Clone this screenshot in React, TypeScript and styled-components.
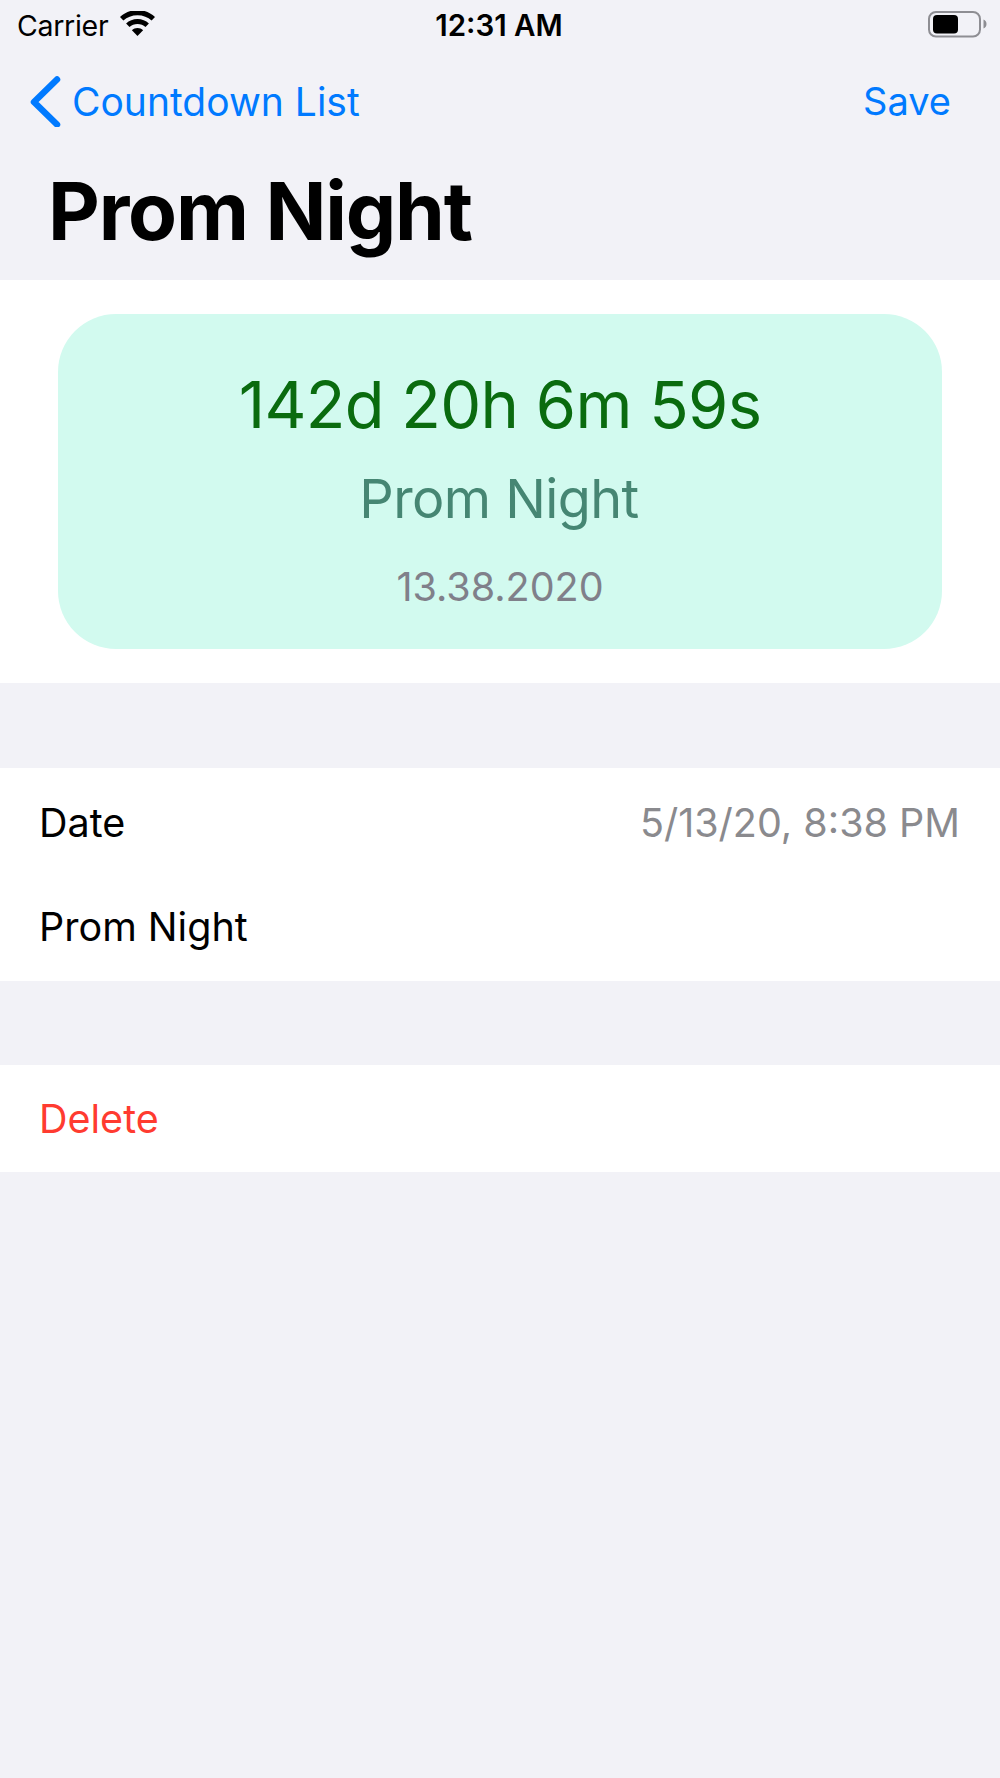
import React from "react";
import styled, { createGlobalStyle } from "styled-components";

const Global = createGlobalStyle`
  html, body { margin: 0; padding: 0; background: #f2f2f7; }
  body { font-family: Inter, "Liberation Sans", sans-serif; -webkit-font-smoothing: antialiased; }
`;

const Page = styled.div`
  width: 1000px;
  height: 1778px;
  background: #f2f2f7;
  overflow: hidden;
  display: flex;
  flex-direction: column;
`;

const StatusBar = styled.div`
  height: 52px;
  box-sizing: border-box;
  display: grid;
  grid-template-columns: 1fr auto 1fr;
  align-items: center;
  padding: 0 13px 2px 17px;
  color: #000;
`;
const StatusLeft = styled.div`
  display: flex;
  align-items: center;
  gap: 11px;
`;
const Carrier = styled.span`
  font-size: 28.5px;
  letter-spacing: -0.3px;
`;
const Clock = styled.span`
  font-size: 29.5px;
  font-weight: 600;
  margin-right: 6px;
`;
const StatusRight = styled.div`
  display: flex;
  justify-content: flex-end;
`;

const NavBar = styled.div`
  height: 100px;
  box-sizing: border-box;
  display: flex;
  align-items: center;
  justify-content: space-between;
  padding: 0 49px 2px 29px;
  color: #007aff;
  font-size: 38px;
`;
const Back = styled.div`
  display: flex;
  align-items: center;
  gap: 11px;
  font-size: 39px;
`;
const Title = styled.h1`
  margin: 0;
  height: 128px;
  padding: 17px 0 0 48px;
  box-sizing: border-box;
  font-size: 80px;
  line-height: 84px;
  font-weight: 700;
  letter-spacing: -1.2px;
  color: #000;
`;

const Section = styled.section<{ $gap?: number }>`
  background: #fff;
  margin-top: ${(p) => p.$gap ?? 0}px;
`;
const CardWrap = styled(Section)`
  padding: 34px 58px;
`;
const Card = styled.div`
  height: 335px;
  border-radius: 58px;
  background: #d2faef;
  display: flex;
  flex-direction: column;
  align-items: center;
`;
const Timer = styled.div`
  margin-top: 52px;
  font-size: 65px;
  line-height: 78px;
  color: #0a6b0f;
  letter-spacing: -0.7px;
`;
const CardName = styled.div`
  margin-top: 23px;
  padding-right: 2px;
  font-size: 54px;
  line-height: 64px;
  color: #468673;
  letter-spacing: -0.6px;
`;
const CardDate = styled.div`
  margin-top: 32px;
  font-size: 39.5px;
  line-height: 48px;
  color: #80808a;
`;

const RowGroup = styled(Section)`
  padding: 3px 0 2px;
`;
const Row = styled.div`
  height: 104px;
  padding: 0 40px 0 39px;
  display: flex;
  align-items: center;
  justify-content: space-between;
  font-size: 39.5px;
  color: #000;
`;
const RowValue = styled.span`
  color: #8a8a8e;
`;
const DeleteRow = styled(Row)`
  color: #ff3b30;
  height: 107px;
`;

const Wifi = () => (
  <svg width="37" height="28" viewBox="0 2 37 28" fill="#000">
    <path d="M18.5 1C11.6 1 5.6 3.7 1 8l3.4 3.6C8 8.2 13 6.2 18.5 6.2S29 8.2 32.6 11.6L36 8C31.4 3.7 25.4 1 18.5 1Z" />
    <path d="M18.5 10c-4.4 0-8.4 1.7-11.4 4.5l3.4 3.6c2.1-1.9 4.9-3.1 8-3.1s5.9 1.2 8 3.1l3.4-3.6C26.900 11.700 22.900 10 18.500 10Z" />
    <path d="M18.500 19c-2.100 0-4.100.8-5.600 2.200l5.600 5.800 5.600-5.800C22.600 19.800 20.600 19 18.500 19Z" />
  </svg>
);

const Battery = () => (
  <svg width="60" height="28" viewBox="0 0 60 28">
    <rect x="2" y="1" width="51" height="24.500" rx="7" fill="none" stroke="#8e8e93" strokeWidth="2" />
    <rect x="6" y="4" width="25" height="18.500" rx="4" fill="#000" />
    <path d="M56.500 8.500c2 .8 3 2.600 3 4.500s-1 3.700-3 4.500Z" fill="#8e8e93" />
  </svg>
);

const Chevron = () => (
  <svg width="32" height="52" viewBox="0 -1 32 52" fill="none">
    <path d="M28 3.500 5 26l23 22.500" stroke="#007aff" strokeWidth="6.500" strokeLinecap="round" strokeLinejoin="round" />
  </svg>
);

export default function App() {
  return (
    <Page>
      <Global />
      <StatusBar>
        <StatusLeft>
          <Carrier>Carrier</Carrier>
          <Wifi />
        </StatusLeft>
        <Clock>12:31 AM</Clock>
        <StatusRight>
          <Battery />
        </StatusRight>
      </StatusBar>
      <NavBar>
        <Back>
          <Chevron />
          <span>Countdown List</span>
        </Back>
        <span>Save</span>
      </NavBar>
      <Title>Prom Night</Title>
      <CardWrap>
        <Card>
          <Timer>142d 20h 6m 59s</Timer>
          <CardName>Prom Night</CardName>
          <CardDate>13.38.2020</CardDate>
        </Card>
      </CardWrap>
      <RowGroup $gap={85}>
        <Row>
          <span>Date</span>
          <RowValue>5/13/20, 8:38 PM</RowValue>
        </Row>
        <Row>Prom Night</Row>
      </RowGroup>
      <Section $gap={84}>
        <DeleteRow>Delete</DeleteRow>
      </Section>
    </Page>
  );
}
